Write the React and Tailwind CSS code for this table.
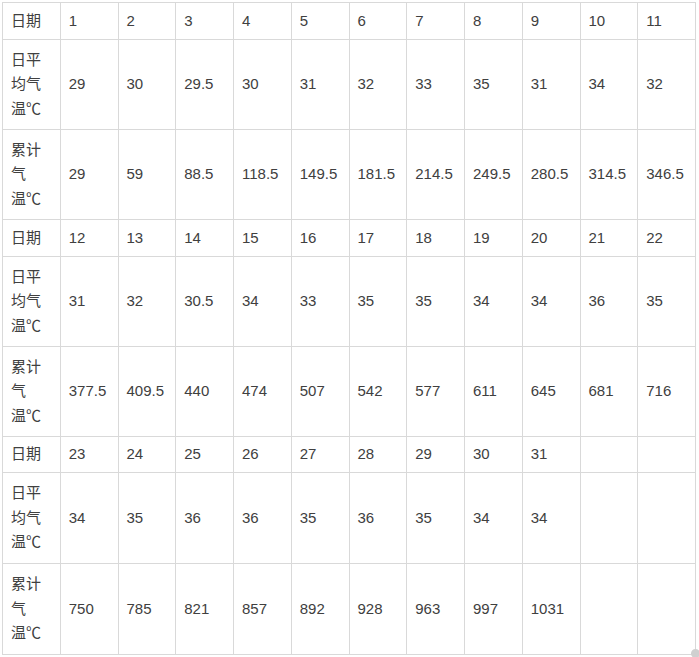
import React from 'react'

const blocks = [
  {
    days: ['1', '2', '3', '4', '5', '6', '7', '8', '9', '10', '11'],
    avg: ['29', '30', '29.5', '30', '31', '32', '33', '35', '31', '34', '32'],
    sum: ['29', '59', '88.5', '118.5', '149.5', '181.5', '214.5', '249.5', '280.5', '314.5', '346.5'],
    h: ['h-[37px]', 'h-[90px]', 'h-[90px]'],
  },
  {
    days: ['12', '13', '14', '15', '16', '17', '18', '19', '20', '21', '22'],
    avg: ['31', '32', '30.5', '34', '33', '35', '35', '34', '34', '36', '35'],
    sum: ['377.5', '409.5', '440', '474', '507', '542', '577', '611', '645', '681', '716'],
    h: ['h-[37px]', 'h-[90px]', 'h-[90px]'],
  },
  {
    days: ['23', '24', '25', '26', '27', '28', '29', '30', '31', '', ''],
    avg: ['34', '35', '36', '36', '35', '36', '35', '34', '34', '', ''],
    sum: ['750', '785', '821', '857', '892', '928', '963', '997', '1031', '', ''],
    h: ['h-[36px]', 'h-[91px]', 'h-[91px]'],
  },
]

const cell = 'border border-[#d9d9d9] px-[8px] align-middle'

const Label = ({ lines }) => (
  <td className={cell + ' leading-[24.5px]'}>
    {lines.map((l, i) => (
      <div key={i}>{l}</div>
    ))}
  </td>
)

export default function App() {
  return (
    <div
      className="relative w-[699px] h-[657px] bg-white text-[#404040] text-[15px] pt-[2px] pl-[2px]"
      style={{ fontFamily: '"Liberation Sans", Arial, "Noto Sans CJK SC", sans-serif' }}
    >
      <table className="table-fixed border-collapse w-[694px]">
        <tbody>
          {blocks.map((b, bi) => (
            <React.Fragment key={bi}>
              <tr className={b.h[0]}>
                <Label lines={['日期']} />
                {b.days.map((v, i) => (
                  <td key={i} className={cell}>{v}</td>
                ))}
              </tr>
              <tr className={b.h[1]}>
                <Label lines={['日平', '均气', '温℃']} />
                {b.avg.map((v, i) => (
                  <td key={i} className={cell}>{v}</td>
                ))}
              </tr>
              <tr className={b.h[2]}>
                <Label lines={['累计', '气', '温℃']} />
                {b.sum.map((v, i) => (
                  <td key={i} className={cell}>{v}</td>
                ))}
              </tr>
            </React.Fragment>
          ))}
        </tbody>
      </table>
      <div className="absolute left-[691px] top-[649px] w-[9px] h-[9px] rounded-full bg-[#d0d0d0]" />
    </div>
  )
}
